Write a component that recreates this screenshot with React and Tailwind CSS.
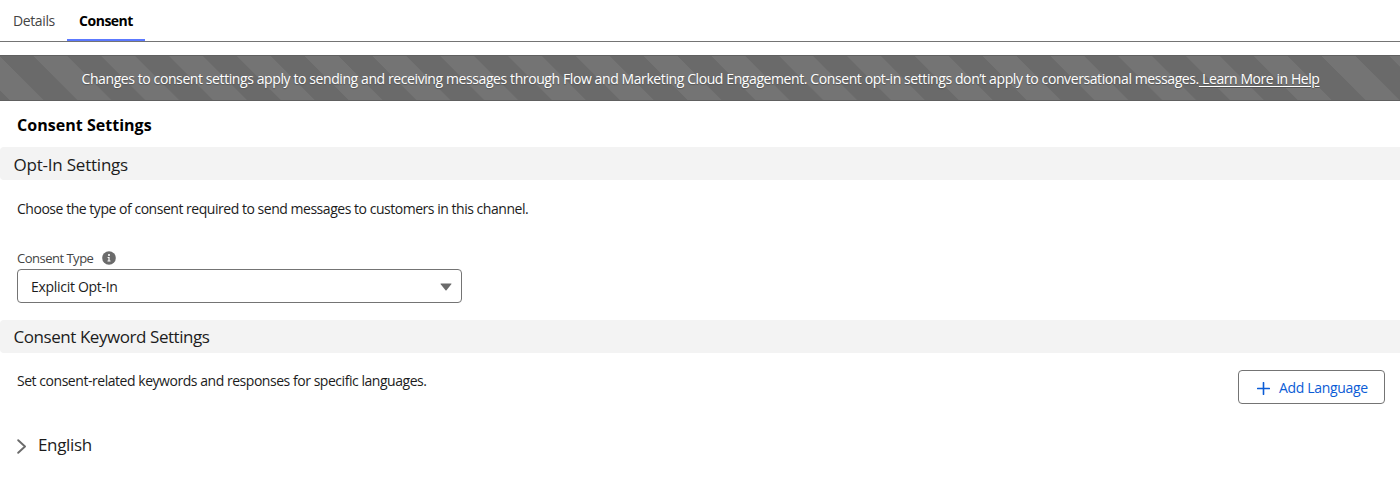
import React from 'react';

const InfoIcon = () => (
    <svg width="14" height="14" viewBox="0 0 14 14" className="block -mt-px">
        <circle cx="7" cy="7" r="6.8" fill="#6b6b6b" />
        <circle cx="7" cy="4" r="1.05" fill="#fff" />
        <path d="M5.6 6h2v3.6h.9v.9H5.5v-.9h.9V6.9h-.8z" fill="#fff" />
    </svg>
);

const Tab = ({ label, active = false, className = '' }) => (
    <button className={`h-[41px] pt-[3px] ${active ? 'border-b-2 border-[#5c79ff] font-bold text-black tracking-[-0.5px]' : 'border-b-2 border-transparent text-[#444] tracking-[-0.38px]'} ${className}`}>
        {label}
    </button>
);

const SectionHeader = ({ children, className = '' }) => (
    <h2 className={`h-[33px] rounded-l pl-[13.5px] bg-[#f3f3f3] text-[17px] text-[#1c1c1c] ${className}`}>
        {children}
    </h2>
);

const Banner = () => (
    <div className="mt-[13px] h-[46px] flex items-center justify-center border-y border-y-[#606060] bg-[#747474] bg-[linear-gradient(45deg,#6a6a6a_25%,transparent_25%,transparent_50%,#6a6a6a_50%,#6a6a6a_75%,transparent_75%)] bg-[length:67.8px_67.8px] text-white whitespace-pre tracking-[-0.405px] [text-shadow:0_1px_1px_#555]">
        <p className="pl-px pt-px">
            Changes to consent settings apply to sending and receiving messages through Flow and Marketing Cloud Engagement. Consent opt-in settings don’t apply to conversational messages.
            <a href="#" className="underline underline-offset-2 tracking-[-0.43px]">{' Learn More in Help'}</a>
        </p>
    </div>
);

export default function App() {
    return (
        <div className="h-[497px] overflow-hidden bg-white text-[14px] leading-5 text-[#1c1c1c] font-['Open_Sans','Liberation_Sans',sans-serif]">
            <nav className="flex h-[42px] border-b border-[#747474]">
                <Tab label="Details" className="w-[67px] pl-[13px] text-left" />
                <Tab label="Consent" active className="w-[78px]" />
            </nav>

            <Banner />

            <h1 className="mt-3 pl-[17px] text-[16px] leading-6 h-[34px] font-bold text-black tracking-[0.03px]">Consent Settings</h1>

            <SectionHeader className="leading-[35px] tracking-[-0.22px]">Opt-In Settings</SectionHeader>
            <p className="mt-[19px] pl-[17px] tracking-[-0.47px]">Choose the type of consent required to send messages to customers in this channel.</p>

            <div className="mt-7 ml-[17px] w-[445px]">
                <div className="flex items-center gap-[9px] h-[22px]">
                    <label className="text-[13px] text-[#444] tracking-[-0.5px]">Consent Type</label>
                    <InfoIcon />
                </div>
                <button className="flex items-center justify-between w-full h-[34px] pl-[13px] pr-[9px] border border-[#747474] rounded bg-white">
                    <span className="pt-px tracking-[-0.3px]">Explicit Opt-In</span>
                    <svg width="12" height="8" viewBox="0 0 12 8" className="mt-px">
                        <path d="M1 .5h10c.5 0 .6.4.3.8L6.5 7.2c-.3.3-.7.3-1 0L.7 1.3C.4.9.5.5 1 .5z" fill="#6b6b6b" />
                    </svg>
                </button>
            </div>

            <SectionHeader className="mt-[17px] leading-[34px] tracking-[-0.44px]">Consent Keyword Settings</SectionHeader>

            <div className="flex justify-between items-start pl-[17px] pr-[15px] mt-[17px]">
                <p className="tracking-[-0.46px] mt-px">Set consent-related keywords and responses for specific languages.</p>
                <button className="flex items-center gap-[9px] w-[147px] h-[34px] pl-[18px] border border-[#747474] rounded bg-white text-[#0b5cd6] tracking-[-0.32px]">
                    <svg width="13" height="13" viewBox="0 0 13 13" className="mt-[3px]">
                        <path d="M6.5.7v11.6M.7 6.5h11.6" stroke="currentColor" strokeWidth="1.6" strokeLinecap="round" />
                    </svg>
                    <span className="pt-px">Add Language</span>
                </button>
            </div>

            <button className="flex items-center gap-[11px] mt-[29px] ml-[17px] text-[17px] leading-6 tracking-[-0.35px]">
                <svg width="10" height="15" viewBox="0 0 10 15" className="mt-[3px]">
                    <path d="M1.2 1.2 8 7.5l-6.8 6.3" fill="none" stroke="#6b6b6b" strokeWidth="1.9" strokeLinecap="round" strokeLinejoin="round" />
                </svg>
                English
            </button>
        </div>
    );
}
